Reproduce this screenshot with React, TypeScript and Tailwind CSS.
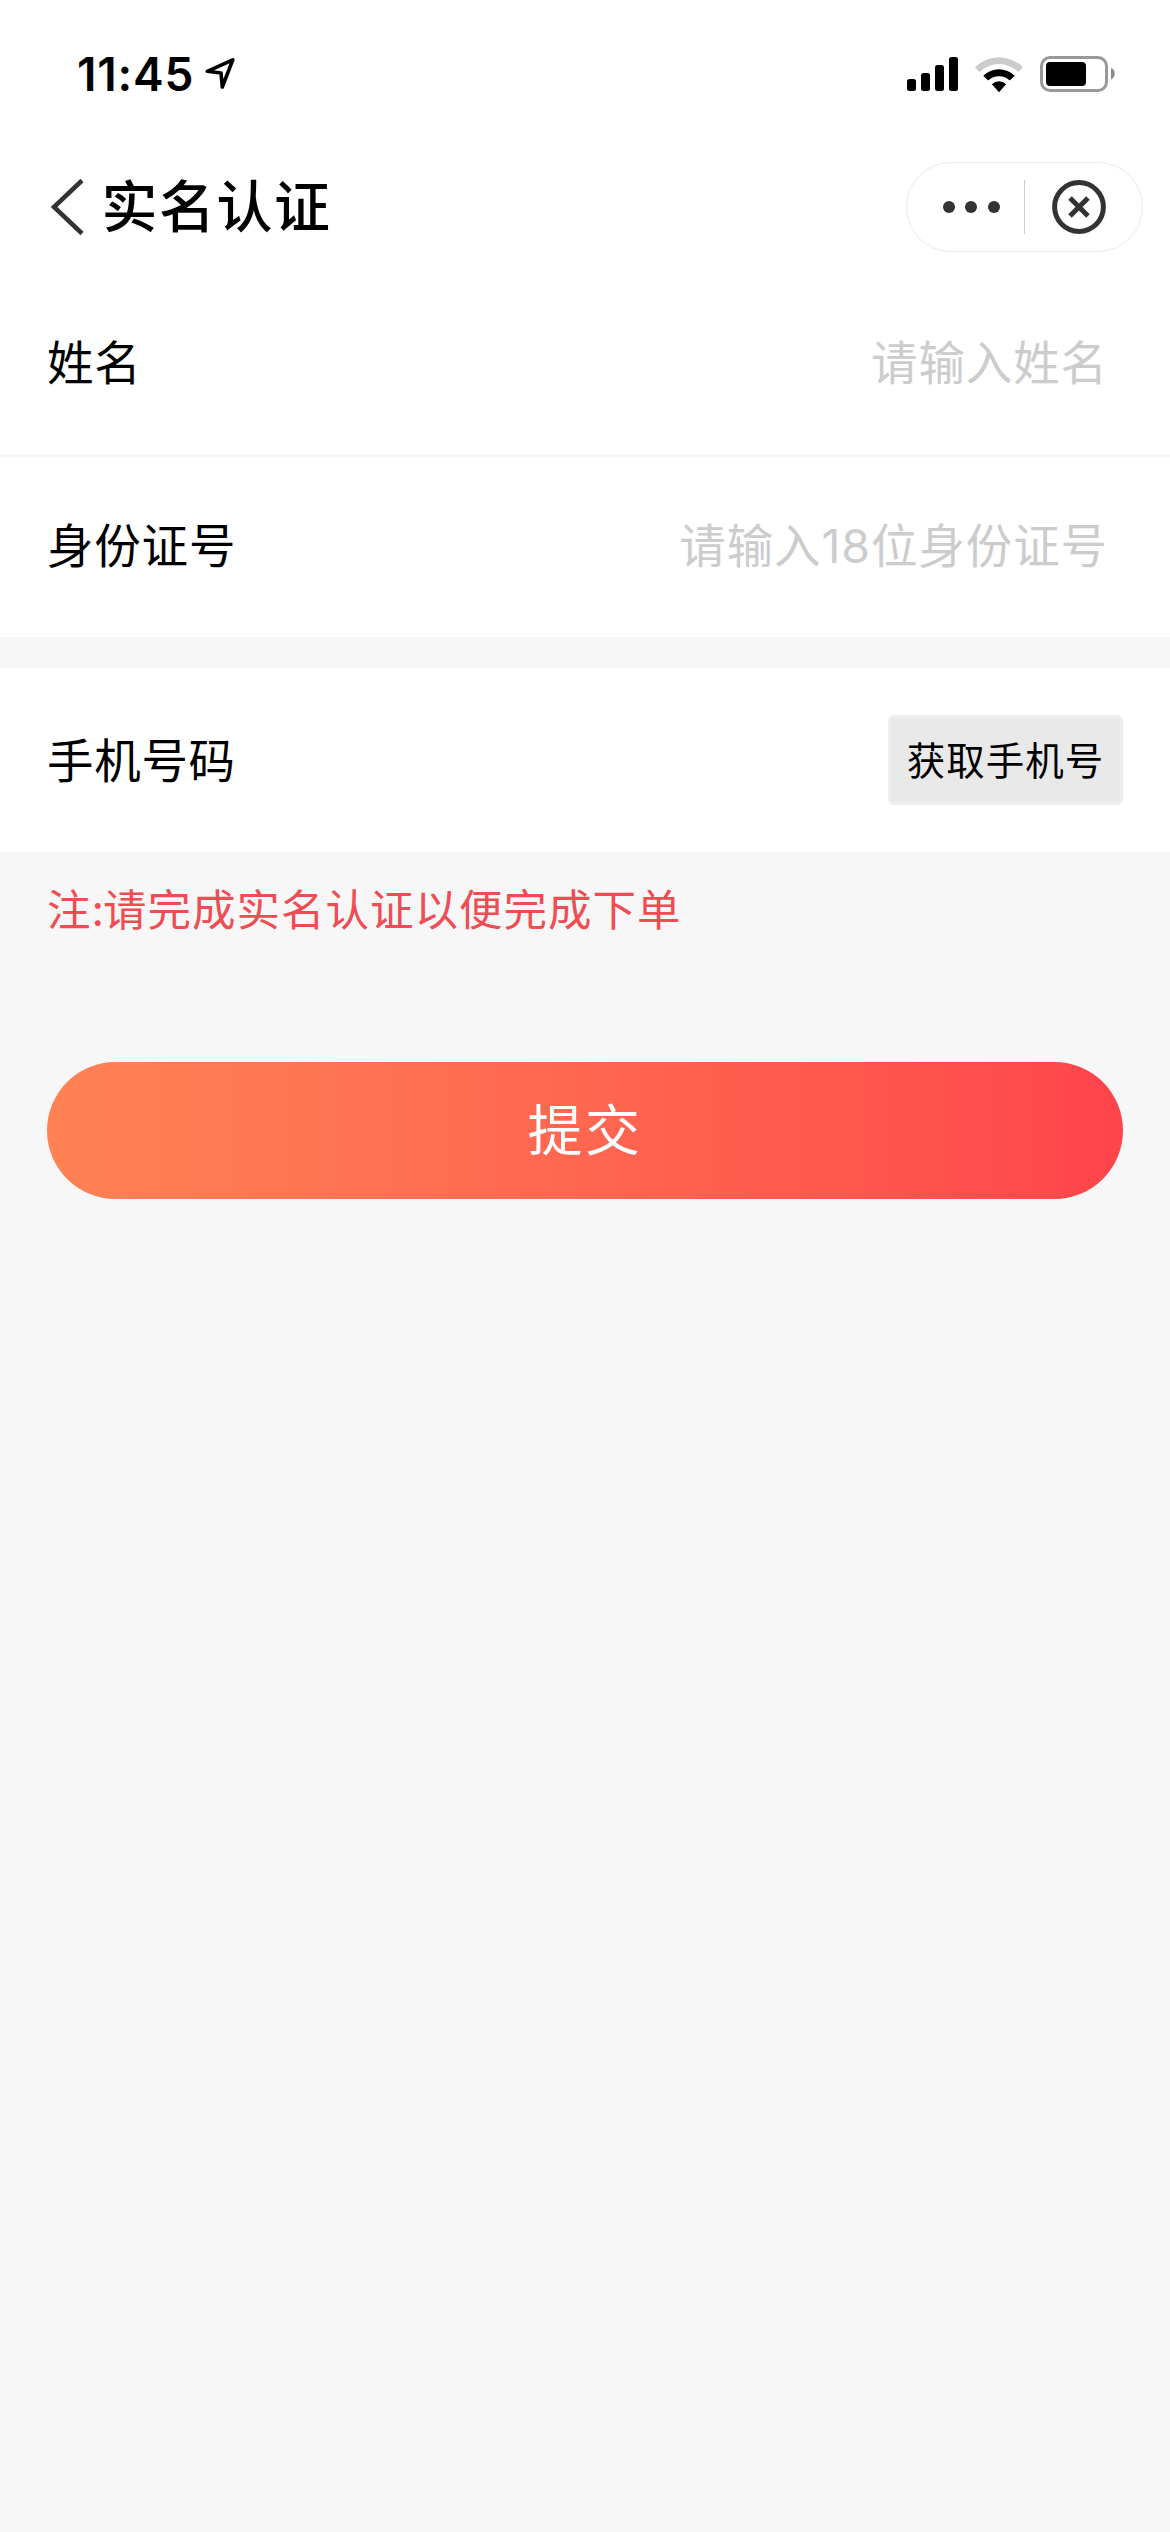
import React from "react";

function StatusBar() {
  return (
    <div className="flex h-[148px] items-center justify-between pl-[77px] pr-[54px]">
      <div className="flex items-center gap-[10px]">
        <span className="text-[46px] leading-none font-semibold tracking-[0.8px]">11:45</span>
        <svg className="h-[36px] w-[34px]" viewBox="0 0 34 36" fill="none">
          <path d="M3.3 15.3 28.8 3.8 18.3 31 17 17Z" stroke="#000" strokeWidth="3.6" strokeLinejoin="round" />
        </svg>
      </div>
      <div className="flex items-center">
        <div className="flex h-[34px] items-end gap-[5px]">
          <i className="h-[12px] w-[9px] rounded-[2.5px] bg-black" />
          <i className="h-[18px] w-[9px] rounded-[2.5px] bg-black" />
          <i className="h-[26px] w-[9px] rounded-[2.5px] bg-black" />
          <i className="h-[34px] w-[9px] rounded-[2.5px] bg-black" />
        </div>
        <svg className="ml-[16px] h-[38px] w-[50px]" viewBox="974 54 50 38">
          <path d="M974.8 66.2A34.6 34.6 0 0 1 1023.2 66.2L1018.3 71A27.5 27.5 0 0 0 979.7 71Z" fill="#ccc" />
          <path d="M983.3 74.7A22.2 22.2 0 0 1 1014.7 74.7L1009.8 79.6A15.3 15.3 0 0 0 988.2 79.6Z" fill="#000" />
          <path d="M991.9 83.3A10 10 0 0 1 1006.1 83.3L999 91.3Z" fill="#000" />
        </svg>
        <svg className="ml-[15px] h-[38px] w-[77px]" viewBox="1039 55 77 38">
          <rect x="1041.5" y="57.5" width="65" height="33" rx="8.5" fill="none" stroke="#999" strokeWidth="3" />
          <rect x="1046" y="62" width="40" height="24" rx="4" fill="#000" />
          <path d="M1111 68C1116 69.5 1116 77.5 1111 79.5Z" fill="#8c8c8c" />
        </svg>
      </div>
    </div>
  );
}

function NavBar() {
  return (
    <div className="flex h-[116px] items-center pt-[2px] pl-[50px] pr-[27px]">
      <svg className="h-[58px] w-[34px]" viewBox="0 0 34 58" fill="none">
        <path d="M32 2.5 4 29 32 55.5" stroke="#333" strokeWidth="4.5" />
      </svg>
      <h1 className="ml-[17.5px] text-[56px] leading-none font-medium tracking-[1.5px]">实名认证</h1>
      <div className="ml-auto flex h-[90px] w-[237px] items-center rounded-full border border-[#ebebeb]">
        <div className="ml-[36px] flex gap-[10.4px]">
          <i className="size-[12px] rounded-full bg-[#333]" />
          <i className="size-[12px] rounded-full bg-[#333]" />
          <i className="size-[12px] rounded-full bg-[#333]" />
        </div>
        <div className="ml-[24px] h-[54px] w-px bg-[#ccc]" />
        <svg className="ml-[27px] size-[54px]" viewBox="0 0 54 54" fill="none" stroke="#333" strokeWidth="5">
          <circle cx="27" cy="27" r="24.4" />
          <path d="M18 18 36 36M36 18 18 36" />
        </svg>
      </div>
    </div>
  );
}

function Field({ label, placeholder }: { label: string; placeholder: string }) {
  return (
    <label className="flex h-[180px] items-center justify-between bg-white pl-[47px] pr-[62px]">
      <span className="text-[46.5px] tracking-[0.8px]">{label}</span>
      <input
        placeholder={placeholder}
        className="h-[80px] w-[700px] pb-[2px] text-right text-[46.5px] tracking-[0.9px] outline-none placeholder:text-[#ccc]"
      />
    </label>
  );
}

export default function App() {
  return (
    <div className="flex min-h-[2532px] w-[1170px] flex-col bg-[#f7f7f7] font-['Inter','Noto_Sans_CJK_SC',sans-serif] text-black">
      <header className="h-[274px] bg-white pb-[10px]">
        <StatusBar />
        <NavBar />
      </header>
      <Field label="姓名" placeholder="请输入姓名" />
      <div className="h-[3px]" />
      <Field label="身份证号" placeholder="请输入18位身份证号" />
      <div className="mt-[31px] flex h-[184px] items-center justify-between bg-white px-[47px]">
        <span className="pt-[3px] text-[46.5px] tracking-[0.7px]">手机号码</span>
        <button className="flex h-[90px] w-[235px] items-center justify-center rounded-[6px] border-[3px] border-[#eee] bg-[#e9e9e9] pt-[4px] text-[38.5px] tracking-[1px] whitespace-nowrap">
          获取手机号
        </button>
      </div>
      <p className="mt-[25px] pl-[47px] text-[43.5px] leading-[66px] tracking-[1px] text-[#f04c53]">
        注<span className="tracking-[-1px]">:</span>请完成实名认证以便完成下单
      </p>
      <button className="mx-[47px] mt-[119px] flex h-[137px] items-center justify-center rounded-full bg-linear-to-r from-[#ff8254] to-[#ff444c] pb-[1px] text-[55px] tracking-[2.5px] text-white">
        提交
      </button>
    </div>
  );
}
